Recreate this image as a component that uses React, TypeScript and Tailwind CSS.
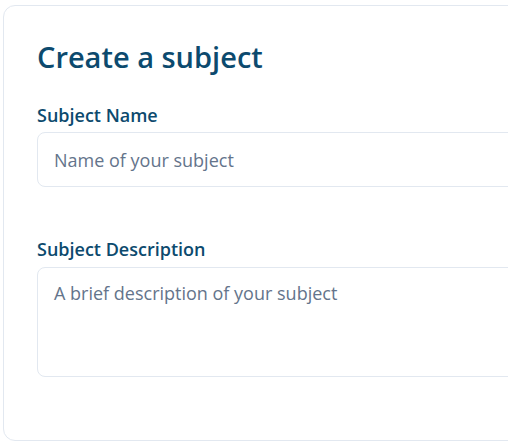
export default function App() {
  return (
    <div className="w-[508px] h-[448px] overflow-hidden bg-white pt-[5px] pl-[3px] font-['Open_Sans',sans-serif]">
      <div className="w-[560px] h-[436px] rounded-xl border border-[#e2e8f0] bg-white px-[33px] pt-[33px]">
        <h1 className="text-[29px] leading-9 font-semibold text-[#0c4a6e]">Create a subject</h1>
        <form className="mt-[28px] flex flex-col">
          <label className="text-[18px] font-semibold text-[#0c4a6e] leading-6">Subject Name</label>
          <input
            className="mt-[5px] h-[55px] w-full rounded-lg border border-[#e2e8f0] px-4 text-[18px] text-[#0c4a6e] placeholder:text-[#64748b] outline-none"
            placeholder="Name of your subject"
          />
          <label className="mt-[50px] text-[18px] font-semibold text-[#0c4a6e] leading-6">Subject Description</label>
          <textarea
            className="mt-[6px] h-[110px] w-full resize-none rounded-lg border border-[#e2e8f0] px-4 py-3 text-[18px] text-[#0c4a6e] placeholder:text-[#64748b] outline-none"
            placeholder="A brief description of your subject"
          />
        </form>
      </div>
    </div>
  );
}
